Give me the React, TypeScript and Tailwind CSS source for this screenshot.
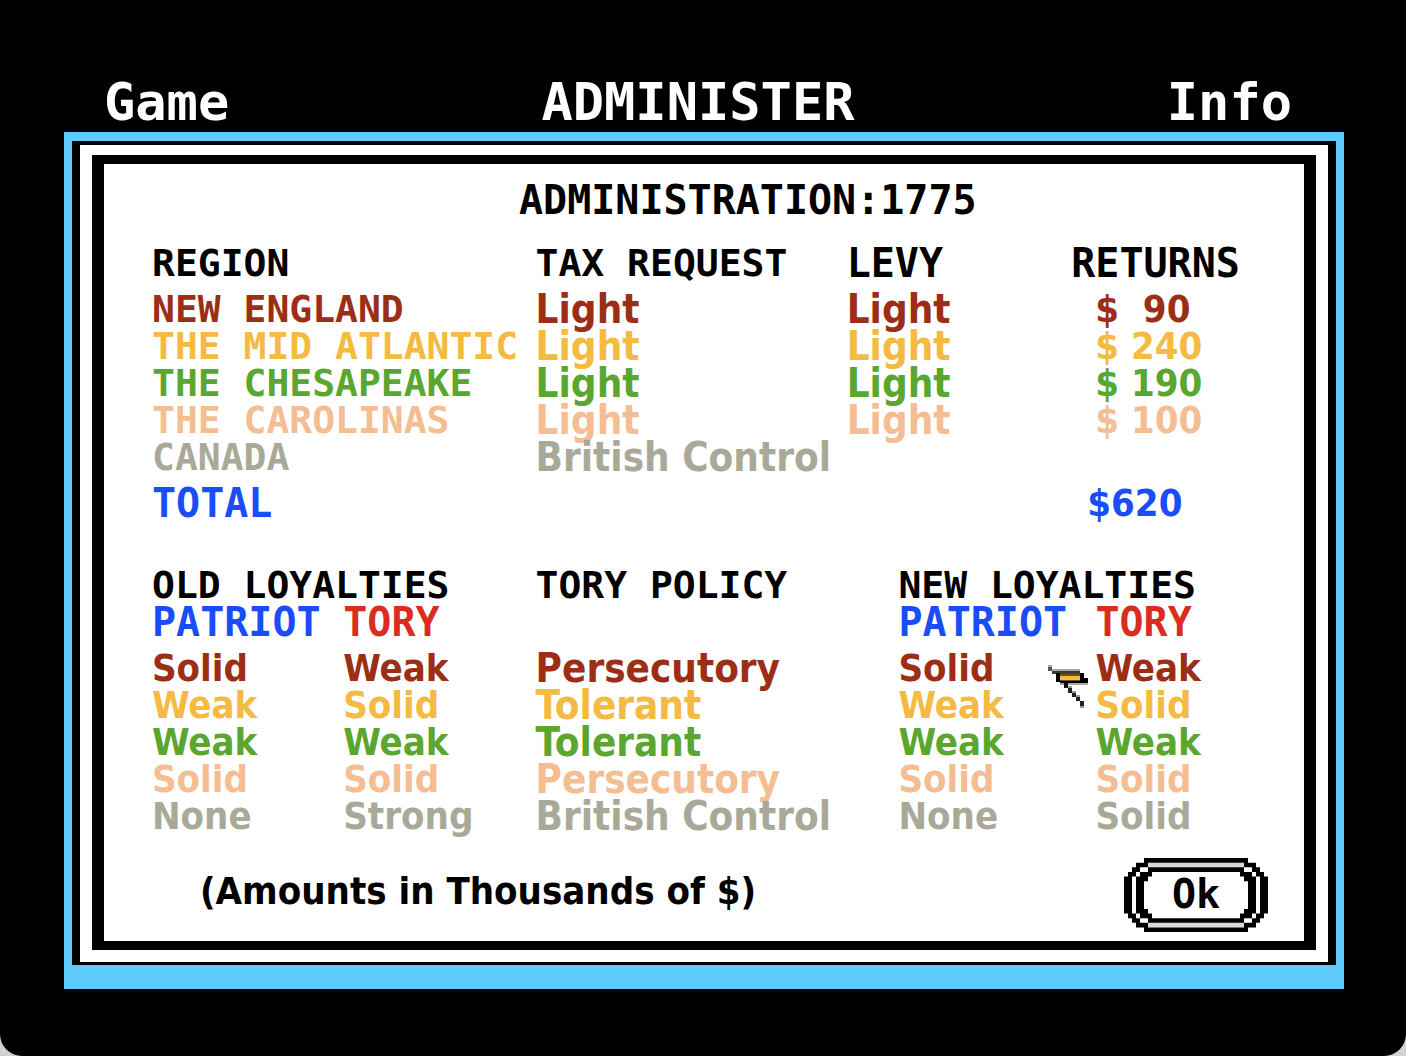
import type { ReactNode } from 'react';

const MONO = 'font-["DejaVu_Sans_Mono",monospace]';
const SANS = 'font-["DejaVu_Sans_Condensed","DejaVu_Sans",sans-serif]';

type TaxRow = { name: string; tone: string; tax: string; levy: string; returns: string };
type LoyaltyRow = { tone: string; old: string[]; policy: string; next: string[] };

const TAX_ROWS: TaxRow[] = [
  { name: 'NEW ENGLAND', tone: 'text-[#9c2e16]', tax: 'Light', levy: 'Light', returns: '$  90' },
  { name: 'THE MID ATLANTIC', tone: 'text-[#f4ba41]', tax: 'Light', levy: 'Light', returns: '$ 240' },
  { name: 'THE CHESAPEAKE', tone: 'text-[#5aa62f]', tax: 'Light', levy: 'Light', returns: '$ 190' },
  { name: 'THE CAROLINAS', tone: 'text-[#f5bd92]', tax: 'Light', levy: 'Light', returns: '$ 100' },
  { name: 'CANADA', tone: 'text-[#a9a999]', tax: 'British Control', levy: '', returns: '' },
];

const LOYALTY_ROWS: LoyaltyRow[] = [
  { tone: 'text-[#9c2e16]', old: ['Solid', 'Weak'], policy: 'Persecutory', next: ['Solid', 'Weak'] },
  { tone: 'text-[#f4ba41]', old: ['Weak', 'Solid'], policy: 'Tolerant', next: ['Weak', 'Solid'] },
  { tone: 'text-[#5aa62f]', old: ['Weak', 'Weak'], policy: 'Tolerant', next: ['Weak', 'Weak'] },
  { tone: 'text-[#f5bd92]', old: ['Solid', 'Solid'], policy: 'Persecutory', next: ['Solid', 'Solid'] },
  { tone: 'text-[#a9a999]', old: ['None', 'Strong'], policy: 'British Control', next: ['None', 'Solid'] },
];

function Head({ children, span }: { children?: ReactNode; span?: number }) {
  return (
    <th scope="col" colSpan={span} className={`${MONO} p-0 text-left font-bold`}>
      {children}
    </th>
  );
}

function TaxTable() {
  return (
    <table className="w-full table-fixed border-collapse whitespace-pre text-[38px] leading-[37px] font-bold">
      <colgroup>
        <col className="w-[33.3%]" />
        <col className="w-[27%]" />
        <col className="w-[19.5%]" />
        <col />
      </colgroup>
      <thead>
        <tr className="h-[46px] align-top">
          <Head>REGION</Head>
          <Head>TAX REQUEST</Head>
          <Head><span className="text-[40px]">LEVY</span></Head>
          <Head><span className="text-[40px]">RETURNS</span></Head>
        </tr>
      </thead>
      <tbody className={SANS}>
        {TAX_ROWS.map((row) => (
          <tr key={row.name} className={row.tone}>
            <th scope="row" className={`${MONO} p-0 text-left font-bold`}>{row.name}</th>
            <td className="p-0 text-[40px]">{row.tax}</td>
            <td className="p-0 text-[40px]">{row.levy}</td>
            <td className="p-0 pl-6">{row.returns}</td>
          </tr>
        ))}
        <tr className="h-[46px] align-bottom text-[#1a4df8]">
          <th scope="row" className={`${MONO} p-0 text-left text-[40px] font-bold`}>TOTAL</th>
          <td className="p-0" />
          <td className="p-0" />
          <td className="p-0 pl-4">$620</td>
        </tr>
      </tbody>
    </table>
  );
}

function LoyaltyTable() {
  return (
    <table className="mt-[45px] w-full table-fixed border-collapse whitespace-pre text-[38px] leading-[37px] font-bold">
      <colgroup>
        <col className="w-[16.6%]" />
        <col className="w-[16.7%]" />
        <col className="w-[31.5%]" />
        <col className="w-[17.1%]" />
        <col />
      </colgroup>
      <thead>
        <tr>
          <Head span={2}>OLD LOYALTIES</Head>
          <Head>TORY POLICY</Head>
          <Head span={2}>NEW LOYALTIES</Head>
        </tr>
        <tr className="h-[46px] align-top text-[40px] text-[#1a4df8]">
          <Head>PATRIOT</Head>
          <Head><span className="text-[#da2d20]">TORY</span></Head>
          <td className="p-0" />
          <Head>PATRIOT</Head>
          <Head><span className="text-[#da2d20]">TORY</span></Head>
        </tr>
      </thead>
      <tbody className={SANS}>
        {LOYALTY_ROWS.map((row) => (
          <tr key={row.tone} className={row.tone}>
            <td className="p-0">{row.old[0]}</td>
            <td className="p-0">{row.old[1]}</td>
            <td className="p-0 text-[40px]">{row.policy}</td>
            <td className="p-0">{row.next[0]}</td>
            <td className="p-0">{row.next[1]}</td>
          </tr>
        ))}
      </tbody>
    </table>
  );
}

/* One quarter of the button's stepped double outline, on an 18 x 8 grid. */
const CORNER =
  'M5 0H18V1H6V2H4V3H3V4H2V8H0V4H1V3H2V2H3V1H5Z M6 2H18V3H7V4H6V5H5V8H3V4H4V3H6Z';

function OkButton() {
  return (
    <button type="button" className="relative h-[74px] w-36 cursor-pointer">
      <svg
        className="absolute inset-0 h-full w-full"
        viewBox="0 0 36 16"
        preserveAspectRatio="none"
        aria-hidden="true"
      >
        <path d="M6 1H30V2H6z M6 14H30V15H6z" fill="#d8d8d8" />
        <path d={CORNER} />
        <path d={CORNER} transform="matrix(-1 0 0 1 36 0)" />
        <path d={CORNER} transform="matrix(1 0 0 -1 0 16)" />
        <path d={CORNER} transform="matrix(-1 0 0 -1 36 16)" />
      </svg>
      <span className={`${MONO} relative text-[40px] leading-[37px] font-bold`}>Ok</span>
    </button>
  );
}

function QuillPointer() {
  return (
    <svg
      className="pointer-events-none absolute top-[501px] left-[944px] h-[44px] w-10"
      viewBox="0 0 40 44"
      shapeRendering="crispEdges"
      aria-hidden="true"
    >
      <path d="M0 0h4v2H0z M4 4h28v2H4z M12 18h28v2H20v2h-4v-2h-4z" fill="#a8a8a8" />
      <path d="M0 2h4v4H0z" fill="#555" />
      <path d="M4 6h28v3H4z" fill="#3c3c3c" />
      <path d="M8 8h4v9H8z M32 8h4v5h4v5H12v-3h20z" />
      <path d="M12 9h20v7H12z" fill="#6e5018" />
      <path d="M12 11h20v4H12z" fill="#f4ba41" />
      <path d="M16 18h4v5h-4z" fill="#111" />
      <path d="M20 23h4v5h-4z M24 28h4v4h-4z M28 32h4v4h-4z M32 36h4v5h-4z" fill="#222" />
      <path d="M20 21h4v2h-4z M24 26h4v2h-4z M28 30h4v2h-4z M32 41h4v2h-4z" fill="#999" />
    </svg>
  );
}

export default function App() {
  return (
    <div className="min-h-screen bg-[#d2d2d2]">
      <main className="flex min-h-screen flex-col rounded-b-[22px] bg-black pt-[76px] pr-[62px] pb-[67px] pl-16">
        <nav
          className={`${MONO} grid h-14 grid-cols-[1fr_auto_1fr] items-start pr-[52px] pl-10 text-[52px] leading-[52px] font-bold text-white`}
        >
          <button type="button" className="cursor-pointer justify-self-start">Game</button>
          <h1>ADMINISTER</h1>
          <button type="button" className="cursor-pointer justify-self-end">Info</button>
        </nav>
        <div className="flex flex-1 flex-col bg-[#5ecbfd] px-2 pt-[9px] pb-6">
          <div className="flex flex-1 flex-col bg-black px-2 pt-1 pb-[3px]">
            <div className="flex flex-1 flex-col bg-white px-3 pt-[10px] pb-3">
              <div className="flex flex-1 flex-col bg-black px-3 py-[9px]">
                <section className="relative flex-1 bg-white pt-[18px] pl-12">
                  <h2 className={`${MONO} pb-[26px] pl-[367px] text-[40px] leading-[37px] font-bold`}>
                    ADMINISTRATION:1775
                  </h2>
                  <TaxTable />
                  <LoyaltyTable />
                  <div className="mt-[23px] flex items-center justify-between pr-9 pl-12">
                    <p className={`${SANS} pb-2 text-[38px] leading-[37px] font-bold`}>
                      (Amounts in Thousands of $)
                    </p>
                    <OkButton />
                  </div>
                  <QuillPointer />
                </section>
              </div>
            </div>
          </div>
        </div>
      </main>
    </div>
  );
}
